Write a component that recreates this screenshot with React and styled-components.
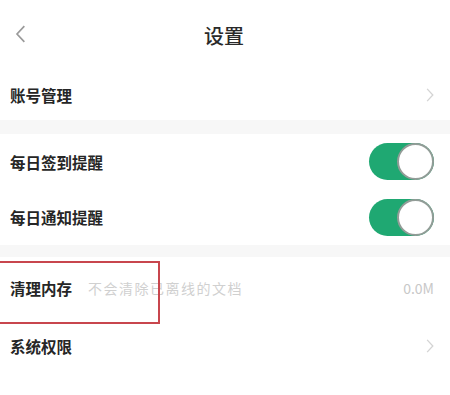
import styled, { createGlobalStyle } from "styled-components";

const GlobalStyle = createGlobalStyle`
  body {
    margin: 0;
    background: #ffffff;
    font-family: "Noto Sans CJK SC", "Noto Sans", sans-serif;
  }
`;

const Page = styled.div`
  width: 450px;
  height: 395px;
  overflow: hidden;
  position: relative;
  background: #fff;
`;

const Header = styled.div`
  height: 70px;
  display: flex;
  align-items: center;
  justify-content: center;
  position: relative;
`;

const Back = styled.div`
  position: absolute;
  left: 15px;
  top: 25px;
  display: flex;
`;

const Title = styled.h1`
  margin: 0 0 0 -2px;
  font-size: 20px;
  font-weight: 500;
  color: #2a2a2a;
`;

const Band = styled.div`
  height: ${(p) => p.h}px;
  background: #f7f7f7;
`;

const Row = styled.div`
  height: ${(p) => p.h}px;
  display: flex;
  align-items: center;
  padding: 0 16px 0 10px;
`;

const Label = styled.span`
  font-size: 15.5px;
  font-weight: 700;
  color: #262626;
`;

const Hint = styled.span`
  margin-left: 16px;
  font-size: 14px;
  letter-spacing: 1.5px;
  color: #d0d0d0;
`;

const Spacer = styled.div`
  flex: 1;
`;

const Value = styled.span`
  font-size: 14px;
  color: #c8c8c8;
`;

const Toggle = styled.div`
  width: 65px;
  height: 37px;
  border-radius: 19px;
  background: #1fa872;
  position: relative;
`;

const Knob = styled.div`
  position: absolute;
  right: 0;
  top: 0;
  width: 33px;
  height: 33px;
  border-radius: 50%;
  background: #fff;
  border: 2px solid #929c97;
`;

const Mark = styled.div`
  position: absolute;
  left: -2px;
  top: 261px;
  width: 158px;
  height: 59px;
  border: 2px solid #c8464d;
`;

const Chevron = ({ left, color = "#d4d4d4", size = 14 }) => (
  <svg width={size * 0.6} height={size} viewBox="0 0 9 16">
    <path
      d={left ? "M8 1 L1.5 8 L8 15" : "M1 1 L7.5 8 L1 15"}
      fill="none"
      stroke={color}
      strokeWidth="1.5"
    />
  </svg>
);

export default function App() {
  return (
    <Page>
      <GlobalStyle />
      <Header>
        <Back>
          <Chevron left color="#9a9a9a" size={18} />
        </Back>
        <Title>设置</Title>
      </Header>
      <Row h={50}>
        <Label>账号管理</Label>
        <Spacer />
        <Chevron />
      </Row>
      <Band h={14} />
      <Row h={55}>
        <Label>每日签到提醒</Label>
        <Spacer />
        <Toggle>
          <Knob />
        </Toggle>
      </Row>
      <Row h={56}>
        <Label>每日通知提醒</Label>
        <Spacer />
        <Toggle>
          <Knob />
        </Toggle>
      </Row>
      <Band h={12} />
      <Row h={61}>
        <Label>清理内存</Label>
        <Hint>不会清除已离线的文档</Hint>
        <Spacer />
        <Value>0.0M</Value>
      </Row>
      <Row h={55}>
        <Label>系统权限</Label>
        <Spacer />
        <Chevron />
      </Row>
      <Mark />
    </Page>
  );
}
